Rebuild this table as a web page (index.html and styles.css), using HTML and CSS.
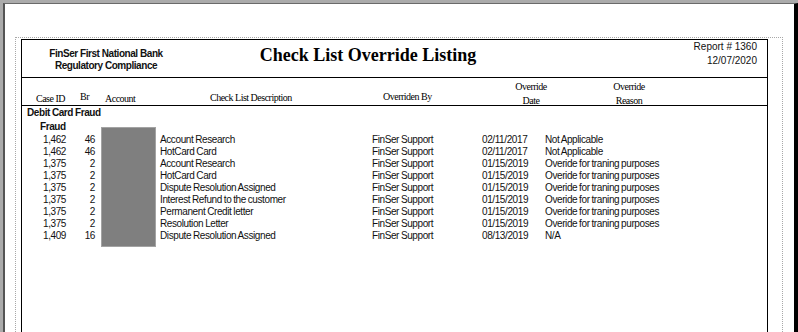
FILE: index.html
```html
<!DOCTYPE html>
<html>
<head>
<meta charset="utf-8">
<link rel="stylesheet" href="styles.css">
</head>
<body>
<div class="page">
  <div class="sheet">
    <div class="report">
      <header class="rhead">
        <div class="org">
          <div>FinSer First National Bank</div>
          <div>Regulatory Compliance</div>
        </div>
        <h1 class="title">Check List Override Listing</h1>
        <div class="meta">
          <div>Report # 1360</div>
          <div>12/07/2020</div>
        </div>
      </header>
      <div class="colhead">
        <div class="ch ch-case">Case ID</div>
        <div class="ch ch-br">Br</div>
        <div class="ch ch-acct">Account</div>
        <div class="ch ch-desc">Check List Description</div>
        <div class="ch ch-by">Overriden By</div>
        <div class="ch ch-two">Override<br>Date</div>
        <div class="ch ch-two">Override<br>Reason</div>
      </div>
      <section class="body">
        <div class="group">Debit Card Fraud</div>
        <div class="subgroup">Fraud</div>
        <div class="rows">
          <div class="row"><span class="num">1,462</span><span class="num">46</span><span></span><span>Account Research</span><span>FinSer Support</span><span>02/11/2017</span><span>Not Applicable</span></div>
          <div class="row"><span class="num">1,462</span><span class="num">46</span><span></span><span>HotCard Card</span><span>FinSer Support</span><span>02/11/2017</span><span>Not Applicable</span></div>
          <div class="row"><span class="num">1,375</span><span class="num">2</span><span></span><span>Account Research</span><span>FinSer Support</span><span>01/15/2019</span><span>Overide for traning purposes</span></div>
          <div class="row"><span class="num">1,375</span><span class="num">2</span><span></span><span>HotCard Card</span><span>FinSer Support</span><span>01/15/2019</span><span>Overide for traning purposes</span></div>
          <div class="row"><span class="num">1,375</span><span class="num">2</span><span></span><span>Dispute Resolution Assigned</span><span>FinSer Support</span><span>01/15/2019</span><span>Overide for traning purposes</span></div>
          <div class="row"><span class="num">1,375</span><span class="num">2</span><span></span><span>Interest Refund to the customer</span><span>FinSer Support</span><span>01/15/2019</span><span>Overide for traning purposes</span></div>
          <div class="row"><span class="num">1,375</span><span class="num">2</span><span></span><span>Permanent Credit letter</span><span>FinSer Support</span><span>01/15/2019</span><span>Overide for traning purposes</span></div>
          <div class="row"><span class="num">1,375</span><span class="num">2</span><span></span><span>Resolution Letter</span><span>FinSer Support</span><span>01/15/2019</span><span>Overide for traning purposes</span></div>
          <div class="row"><span class="num">1,409</span><span class="num">16</span><span></span><span>Dispute Resolution Assigned</span><span>FinSer Support</span><span>08/13/2019</span><span>N/A</span></div>
        </div>
        <div class="redact"></div>
      </section>
    </div>
  </div>
</div>
</body>
</html>
```

FILE: styles.css
```css
*, *::before, *::after { box-sizing: border-box; }
html, body {
  margin: 0;
  padding: 0;
  height: 100%;
  overflow: hidden;
  background: #ababab;
}
.page {
  margin: 3px 0 0 3px;
  height: calc(100vh - 3px);
  background: #fff;
  border-left: 2px solid #555;
  border-top: 1px solid #6a6a6a;
  border-right: 4px solid #000;
  display: flex;
  flex-direction: column;
  padding: 33px 11px 0 10px;
}
.sheet {
  flex: 1;
  display: flex;
  flex-direction: column;
  border: 1px dotted #a8a8a8;
  border-bottom: none;
  padding: 1px 14px 0 5px;
}
.report {
  flex: 1;
  border: 1px solid #000;
  border-bottom: none;
  font-family: "Liberation Sans", Arial, sans-serif;
  color: #111;
}
.rhead {
  height: 38px;
  border-bottom: 1px solid #000;
  display: grid;
  grid-template-columns: 168px 356px 1fr;
}
.org {
  padding-top: 8px;
  text-align: center;
  font-weight: bold;
  font-size: 10px;
  line-height: 12px;
  letter-spacing: -0.45px;
}
.title {
  margin: 0;
  padding-top: 5px;
  text-align: center;
  font-family: "Liberation Serif", "Times New Roman", serif;
  font-weight: bold;
  font-size: 18px;
  line-height: 20px;
  color: #000;
}
.meta {
  text-align: right;
  padding-right: 10px;
  font-size: 10px;
  line-height: 14px;
}
.colhead {
  height: 28px;
  border-bottom: 1px solid #000;
  display: grid;
  grid-template-columns: 50px 25px 85px 180px 120px 98px 98px 1fr;
  align-items: end;
  font-family: "Liberation Serif", "Times New Roman", serif;
  font-size: 10px;
  line-height: 12px;
  letter-spacing: -0.5px;
  color: #000;
}
.ch { white-space: nowrap; }
.ch-case { padding-left: 14px; }
.ch-br { padding-left: 8px; margin-bottom: 2px; }
.ch-acct { padding-left: 8px; }
.ch-desc { padding-left: 28px; margin-bottom: 1px; }
.ch-by { padding-left: 21px; margin-bottom: 2px; }
.ch-two {
  text-align: center;
  line-height: 14px;
  margin-bottom: -3px;
}
.body {
  position: relative;
  font-size: 10px;
  line-height: 12px;
  letter-spacing: -0.4px;
  word-spacing: -0.5px;
}
.group {
  padding: 1px 0 0 5px;
  font-weight: bold;
}
.subgroup {
  margin-top: 2px;
  padding-left: 18px;
  font-weight: bold;
}
.rows { margin-top: 1px; }
.row {
  display: grid;
  grid-template-columns: 44px 29px 65px 212px 110px 63px 1fr;
  white-space: nowrap;
}
.num { text-align: right; }
.redact {
  position: absolute;
  left: 79px;
  top: 21px;
  width: 55px;
  height: 120px;
  background: #7f7f7f;
  border: 1px solid #a3a3a3;
}
```
